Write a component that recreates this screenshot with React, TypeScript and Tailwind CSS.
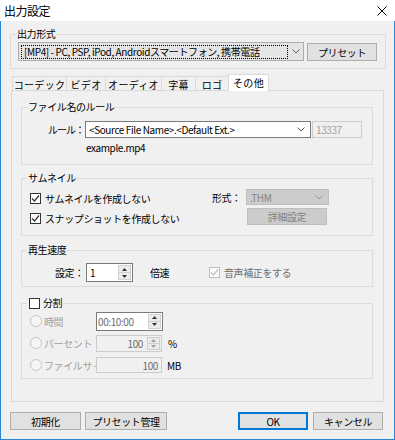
import React from "react";

function Chevron({ color = "#606060" }: { color?: string }) {
  return (
    <svg width="8" height="5" viewBox="0 0 8 5">
      <path d="M0.5 0.5 L4 4 L7.5 0.5" fill="none" stroke={color} strokeWidth="1" />
    </svg>
  );
}

function CheckBox({ checked, disabled }: { checked?: boolean; disabled?: boolean }) {
  const stroke = disabled ? "#bcbcbc" : "#333333";
  return (
    <span
      className={
        disabled
          ? "flex h-[11px] w-[11px] shrink-0 items-center justify-center border border-[#bcbcbc] bg-white"
          : "flex h-[11px] w-[11px] shrink-0 items-center justify-center border border-[#333333] bg-white"
      }
    >
      {checked && (
        <svg width="9" height="9" viewBox="0 0 9 9">
          <path d="M1 4.5 L3.5 7 L8 1.5" fill="none" stroke={stroke} strokeWidth="1.2" />
        </svg>
      )}
    </span>
  );
}

function Radio() {
  return <span className="h-[12px] w-[12px] shrink-0 rounded-full border border-[#c6c6c6] bg-[#f6f6f6]" />;
}

function Spinner({ disabled }: { disabled?: boolean }) {
  const fill = disabled ? "#a0a0a0" : "#333333";
  return (
    <div className="my-[1px] mr-[1px] flex w-[13px] shrink-0 flex-col self-stretch border border-[#cfcfcf] bg-[#ececec]">
      <div className="flex flex-1 items-center justify-center border-b border-[#cfcfcf]">
        <svg width="5" height="3" viewBox="0 0 5 3">
          <path d="M0 3 L2.5 0 L5 3 Z" fill={fill} />
        </svg>
      </div>
      <div className="flex flex-1 items-center justify-center">
        <svg width="5" height="3" viewBox="0 0 5 3">
          <path d="M0 0 L2.5 3 L5 0 Z" fill={fill} />
        </svg>
      </div>
    </div>
  );
}

function Button({ label, className = "" }: { label: string; className?: string }) {
  return (
    <button className={`flex h-[18px] items-center justify-center border border-[#adadad] bg-[#e1e1e1] ${className}`}>
      {label}
    </button>
  );
}

function Group({
  legend,
  className = "",
  children,
}: {
  legend: React.ReactNode;
  className?: string;
  children: React.ReactNode;
}) {
  return (
    <fieldset className={`border border-[#dcdcdc] ${className}`}>
      <legend className="ml-[5px] px-[1px] leading-[14px]">{legend}</legend>
      {children}
    </fieldset>
  );
}

const tabs = [
  { label: "コーデック", w: "w-[54px]" },
  { label: "ビデオ", w: "w-[39px]" },
  { label: "オーディオ", w: "w-[56px]" },
  { label: "字幕", w: "w-[34px]" },
  { label: "ロゴ", w: "w-[33px]" },
];

export default function App() {
  return (
    <div className="flex h-[440px] w-[395px] flex-col font-['Noto_Sans_CJK_JP',sans-serif] text-[10px] tracking-[-0.4px] text-black">
      {/* title bar */}
      <div className="flex h-[21px] items-center justify-between bg-white pl-[4px] pr-[8px]">
        <span className="text-[12px] tracking-[-0.5px]">出力設定</span>
        <svg width="10" height="10" viewBox="0 0 10 10">
          <path d="M0.5 0.5 L9.5 9.5 M9.5 0.5 L0.5 9.5" stroke="#000" strokeWidth="1" />
        </svg>
      </div>

      <div className="flex flex-1 flex-col border-x border-b border-[#2b87d3] bg-[#f0f0f0]">
        {/* output format */}
        <Group legend="出力形式" className="ml-[9px] mt-[6px] w-[376px]">
          <div className="flex items-start pb-[7px] pl-[7px] pt-[1px]">
            <div className="flex h-[19px] w-[286px] items-center border border-[#adadad] bg-[#e5e5e5]">
              <div className="ml-[2px] flex h-[14px] w-[267px] items-center border border-dotted border-black px-[2px] whitespace-nowrap">
                [MP4] - PC, PSP, iPod, Androidスマートフォン, 携帯電話
              </div>
              <div className="flex flex-1 justify-center">
                <Chevron />
              </div>
            </div>
            <Button label="プリセット" className="ml-[3px] mt-[1px] h-[17px] w-[70px]" />
          </div>
        </Group>

        {/* tabs */}
        <div className="ml-[11px] mt-[5px] flex h-[17px] items-end">
          {tabs.map((t) => (
            <div
              key={t.label}
              className={`flex h-[15px] items-center justify-center border-l border-t border-[#d9d9d9] tracking-[0.3px] ${t.w}`}
            >
              {t.label}
            </div>
          ))}
          <div className="relative z-10 flex h-[17px] w-[41px] items-center justify-center border-x border-t border-[#d9d9d9] bg-white pb-[1px] tracking-[0.3px]">
            その他
          </div>
        </div>

        <div className="-mt-px ml-[10px] flex h-[312px] w-[373px] flex-col border border-[#d9d9d9] pl-[9px]">
          {/* file name rule */}
          <Group legend="ファイル名のルール" className="mt-[9px] w-[352px]">
            <div className="flex items-center pl-[26px] pt-[7px]">
              <span className="w-[37px] whitespace-nowrap tracking-[-1px]">ルール：</span>
              <div className="flex h-[17px] w-[226px] items-center justify-between border border-[#7a7a7a] bg-white pl-[3px] pr-[5px] whitespace-nowrap">
                <span>&lt;Source File Name&gt;.&lt;Default Ext.&gt;</span>
                <Chevron />
              </div>
              <div className="ml-[1px] flex h-[17px] w-[50px] items-center border border-[#cccccc] bg-[#f0f0f0] px-[3px] text-[#a0a0a0]">
                13337
              </div>
            </div>
            <div className="mt-[4px] pb-[10px] pl-[64px] leading-[12px]">example.mp4</div>
          </Group>

          {/* thumbnail */}
          <Group legend="サムネイル" className="mt-[6px] w-[352px]">
            <div className="flex pb-[7px] pl-[8px] pt-[3px]">
              <div className="flex w-[182px] flex-col">
                <div className="flex h-[20px] items-center gap-[4px]">
                  <CheckBox checked />
                  <span>サムネイルを作成しない</span>
                </div>
                <div className="flex h-[20px] items-center gap-[4px]">
                  <CheckBox checked />
                  <span>スナップショットを作成しない</span>
                </div>
              </div>
              <div className="mt-[1px] flex flex-col">
                <div className="flex items-center">
                  <span className="w-[34px] whitespace-nowrap">形式：</span>
                  <div className="flex h-[16px] w-[83px] items-center justify-between border border-[#bfbfbf] bg-[#cccccc] pl-[3px] pr-[5px] text-[#838383]">
                    <span>.THM</span>
                    <Chevron color="#9a9a9a" />
                  </div>
                </div>
                <button className="ml-[35px] mt-[3px] flex h-[17px] w-[80px] items-center justify-center border border-[#bfbfbf] bg-[#cccccc] text-[#838383]">
                  詳細設定
                </button>
              </div>
            </div>
          </Group>

          {/* playback speed */}
          <Group legend="再生速度" className="mt-[7px] w-[352px]">
            <div className="flex items-center pb-[4px] pl-[33px] pt-[6px]">
              <span className="w-[31px] whitespace-nowrap">設定：</span>
              <div className="flex h-[19px] w-[47px] border border-[#7a7a7a] bg-white">
                <span className="flex flex-1 items-center px-[3px]">1</span>
                <Spinner />
              </div>
              <span className="ml-[17px] w-[59px]">倍速</span>
              <div className="flex items-center gap-[4px] text-[#6d6d6d]">
                <CheckBox checked disabled />
                <span>音声補正をする</span>
              </div>
            </div>
          </Group>

          {/* split */}
          <Group
            legend={
              <span className="flex items-center gap-[3px] pl-[1px]">
                <CheckBox />
                <span>分割</span>
              </span>
            }
            className="mt-[9px] w-[352px]"
          >
            <div className="flex flex-col gap-[2px] pb-[3px] pl-[8px] pt-[1px]">
              <div className="flex h-[20px] items-center">
                <div className="flex w-[66px] items-center gap-[2px] whitespace-nowrap text-[#a0a0a0]">
                  <Radio />
                  <span>時間</span>
                </div>
                <div className="flex h-[19px] w-[67px] border border-[#7a7a7a] bg-white">
                  <span className="flex flex-1 items-center pl-[1px] text-[#6d6d6d]">00:10:00</span>
                  <Spinner />
                </div>
              </div>
              <div className="flex h-[20px] items-center">
                <div className="flex w-[66px] items-center gap-[2px] whitespace-nowrap text-[#a0a0a0]">
                  <Radio />
                  <span>パーセント</span>
                </div>
                <div className="flex h-[17px] w-[66px] border border-[#cccccc] bg-[#f0f0f0]">
                  <span className="flex flex-1 items-center justify-end pr-[4px] text-[#6d6d6d]">100</span>
                  <Spinner disabled />
                </div>
                <span className="ml-[6px]">%</span>
              </div>
              <div className="flex h-[20px] items-center">
                <div className="flex w-[66px] items-center gap-[2px] whitespace-nowrap text-[#a0a0a0]">
                  <Radio />
                  <span>ファイルサ·</span>
                </div>
                <div className="flex h-[16px] w-[66px] items-center justify-end border border-[#cccccc] bg-[#f0f0f0] pr-[3px] text-[#6d6d6d]">
                  100
                </div>
                <span className="ml-[5px]">MB</span>
              </div>
            </div>
          </Group>
        </div>

        {/* bottom buttons */}
        <div className="ml-[9px] mr-[11px] mt-[10px] flex justify-between">
          <div className="flex gap-[4px]">
            <Button label="初期化" className="w-[71px]" />
            <Button label="プリセット管理" className="w-[82px]" />
          </div>
          <div className="flex gap-[5px]">
            <button className="flex h-[18px] w-[70px] items-center justify-center border-2 border-[#0078d7] bg-[#e1e1e1]">
              OK
            </button>
            <Button label="キャンセル" className="w-[70px]" />
          </div>
        </div>
      </div>
    </div>
  );
}
